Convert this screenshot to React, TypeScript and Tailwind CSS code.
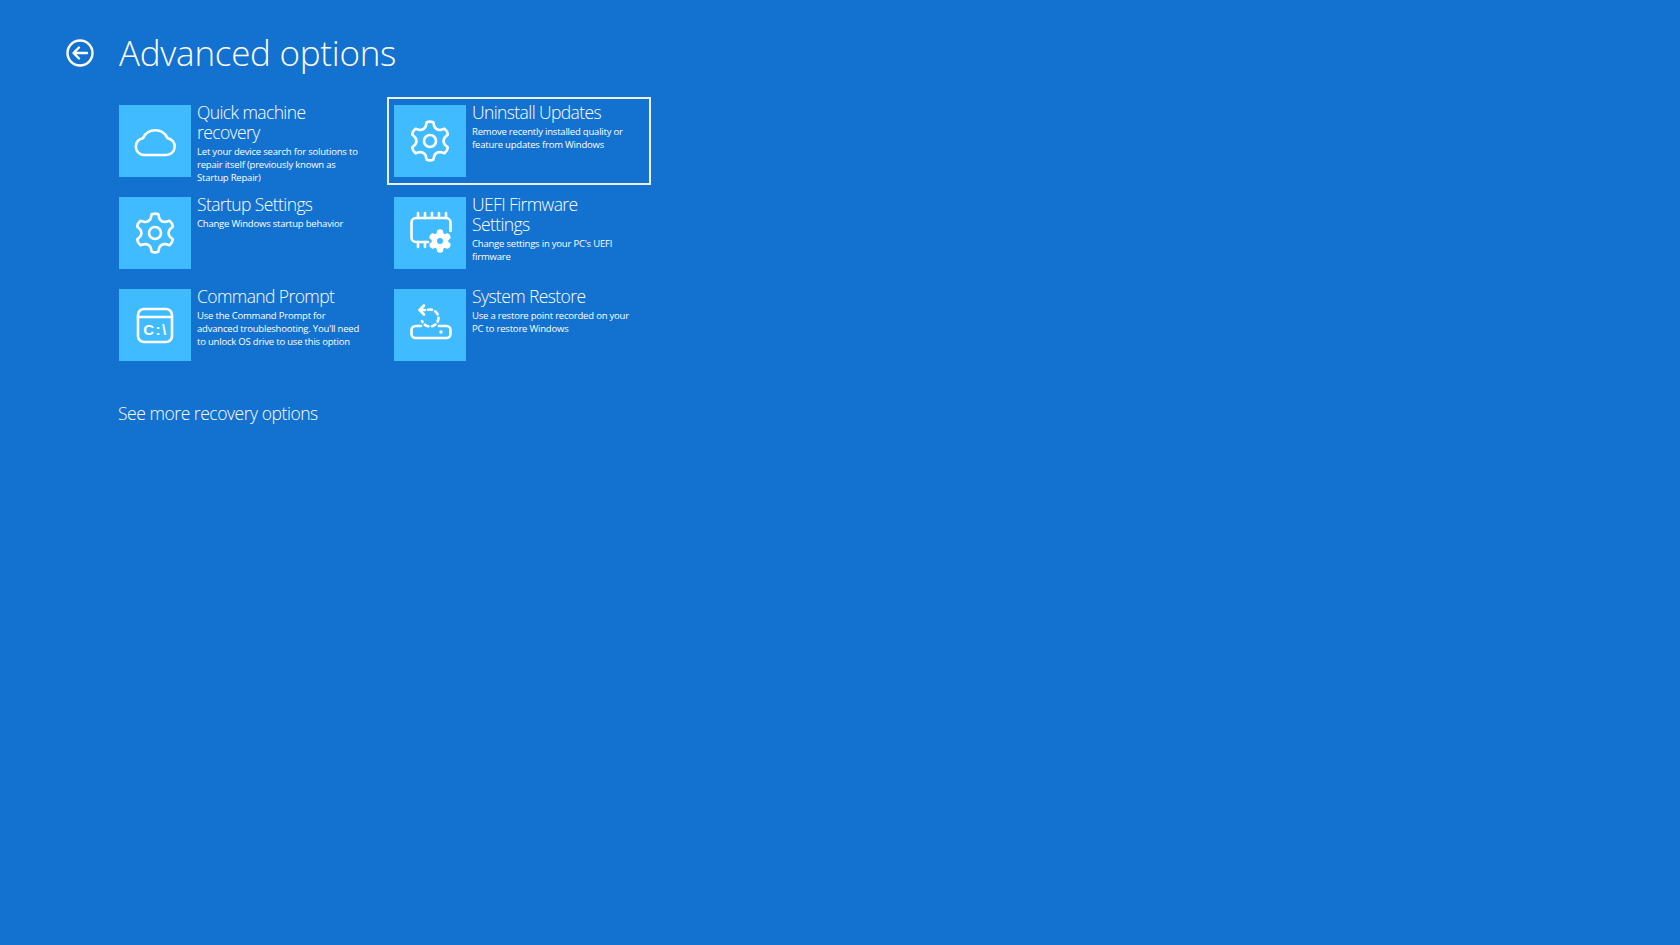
import type { ReactNode } from "react";

// rounded cog outline, one tooth pointing up
const gearPath = (cx: number, cy: number, tip: number, base: number, valley: number) => {
  const pt = (deg: number, r: number) => {
    const a = (deg * Math.PI) / 180;
    return `${(cx + r * Math.cos(a)).toFixed(2)} ${(cy + r * Math.sin(a)).toFixed(2)}`;
  };
  let d = "";
  for (let i = 0; i < 6; i++) {
    const a = i * 60 - 90;
    d += `${i === 0 ? "M" : "L"}${pt(a - 17, base)} L${pt(a - 10, tip)} Q${pt(a, tip + 1)} ${pt(a + 10, tip)} L${pt(a + 17, base)} Q${pt(a + 30, valley)} ${pt(a + 43, base)} `;
  }
  return d + "Z";
};

const Glyph = ({ children }: { children: ReactNode }) => (
  <svg viewBox="0 0 72 72" className="h-[72px] w-[72px]" fill="none" stroke="white" strokeWidth="2.6" strokeLinecap="round" strokeLinejoin="round">
    {children}
  </svg>
);

const CloudIcon = () => (
  <Glyph>
    <path d="M25 50h22a8.500 8.500 0 0 0 1.500-16.900A13.500 13.500 0 0 0 24 33.100 8.500 8.500 0 0 0 25 50Z" />
  </Glyph>
);

const GearIcon = () => (
  <Glyph>
    <path d={gearPath(36, 36, 19, 15, 12.5)} />
    <circle cx="36" cy="36" r="6" />
  </Glyph>
);

const CmdIcon = () => (
  <Glyph>
    <rect x="19" y="20" width="34" height="33" rx="6" />
    <path d="M19 28h34" />
    <text x="36.500" y="45.500" textAnchor="middle" fill="white" stroke="none" fontSize="15" fontWeight="700" letterSpacing="1.500" fontFamily="'Liberation Sans', sans-serif">C:\</text>
  </Glyph>
);

const ChipIcon = () => (
  <Glyph>
    <path d="M34 45H22a4.500 4.500 0 0 1-4.500-4.500V25.500A4.500 4.500 0 0 1 22 21h30a4.500 4.500 0 0 1 4.500 4.500V34" />
    <path d="M24 16v5M31 16v5M38 16v5M45 16v5M52 16v5M24 45v5M31 45v5" />
    <path d={gearPath(46, 44, 10, 7.500, 6.500)} fill="white" />
    <circle cx="46" cy="44" r="3" fill="#40bbff" stroke="none" />
  </Glyph>
);

const RestoreIcon = () => (
  <Glyph>
    <path d="M27 37h-5.500a4 4 0 0 0-4 4v4a4 4 0 0 0 4 4h31a4 4 0 0 0 4-4v-4a4 4 0 0 0-4-4H45" />
    <circle cx="47" cy="43" r="1.700" fill="white" stroke="none" />
    <path d="M34 20.700A8.500 8.500 0 1 1 28 32" strokeDasharray="4 3.500" />
    <path d="M31 21h-5.500M30 16.500 25.500 21l4.500 4.500" />
  </Glyph>
);

const options = [
  { title: "Quick machine recovery", text: "Let your device search for solutions to repair itself (previously known as Startup Repair)", icon: CloudIcon },
  { title: "Uninstall Updates", text: "Remove recently installed quality or feature updates from Windows", icon: GearIcon, focused: true },
  { title: "Startup Settings", text: "Change Windows startup behavior", icon: GearIcon },
  { title: "UEFI Firmware Settings", text: "Change settings in your PC's UEFI firmware", icon: ChipIcon },
  { title: "Command Prompt", text: "Use the Command Prompt for advanced troubleshooting. You'll need to unlock OS drive to use this option", icon: CmdIcon },
  { title: "System Restore", text: "Use a restore point recorded on your PC to restore Windows", icon: RestoreIcon },
];

const App = () => {
  return (
    <div className="h-[945px] w-[1680px] overflow-hidden bg-[#1371d0] text-white font-['Open_Sans','Liberation_Sans',sans-serif] font-light">
      {/* Header */}
      <div className="flex items-center pl-[66px] pt-[29px]">
        <svg viewBox="0 0 28 28" className="h-[28px] w-[28px]" fill="none" stroke="white" strokeWidth="2.400" strokeLinecap="round" strokeLinejoin="round">
          <circle cx="14" cy="14" r="12.500" />
          <path d="M21 14H8M13 8.500 7.500 14l5.500 5.500" />
        </svg>
        <h1 className="ml-[25px] text-[35px] leading-[48px] font-light tracking-[-0.27px]">Advanced options</h1>
      </div>

      {/* Options grid */}
      <div className="mt-[20px] ml-[112px] grid w-[539px] grid-cols-[264px_264px] gap-x-[11px] gap-y-[4px]">
        {options.map((opt) => (
          <div
            key={opt.title}
            className={`flex h-[88px] border-2 pt-[6px] pl-[5px] ${opt.focused ? "border-white/90" : "border-transparent"}`}
          >
            <div className="h-[72px] w-[72px] shrink-0 bg-[#40bbff]">
              <opt.icon />
            </div>
            <div className="ml-[6px] -mt-[3.500px] w-[165px]">
              <div className="text-[17.500px] leading-[20px] tracking-[-0.6px]">{opt.title}</div>
              <p className="mt-[3px] text-[9.500px] leading-[13px] tracking-[-0.2px] font-normal">{opt.text}</p>
            </div>
          </div>
        ))}
      </div>

      <div className="mt-[32px] ml-[118px] text-[17.500px] leading-[24px] tracking-[-0.46px]">See more recovery options</div>
    </div>
  );
};

export default App;
